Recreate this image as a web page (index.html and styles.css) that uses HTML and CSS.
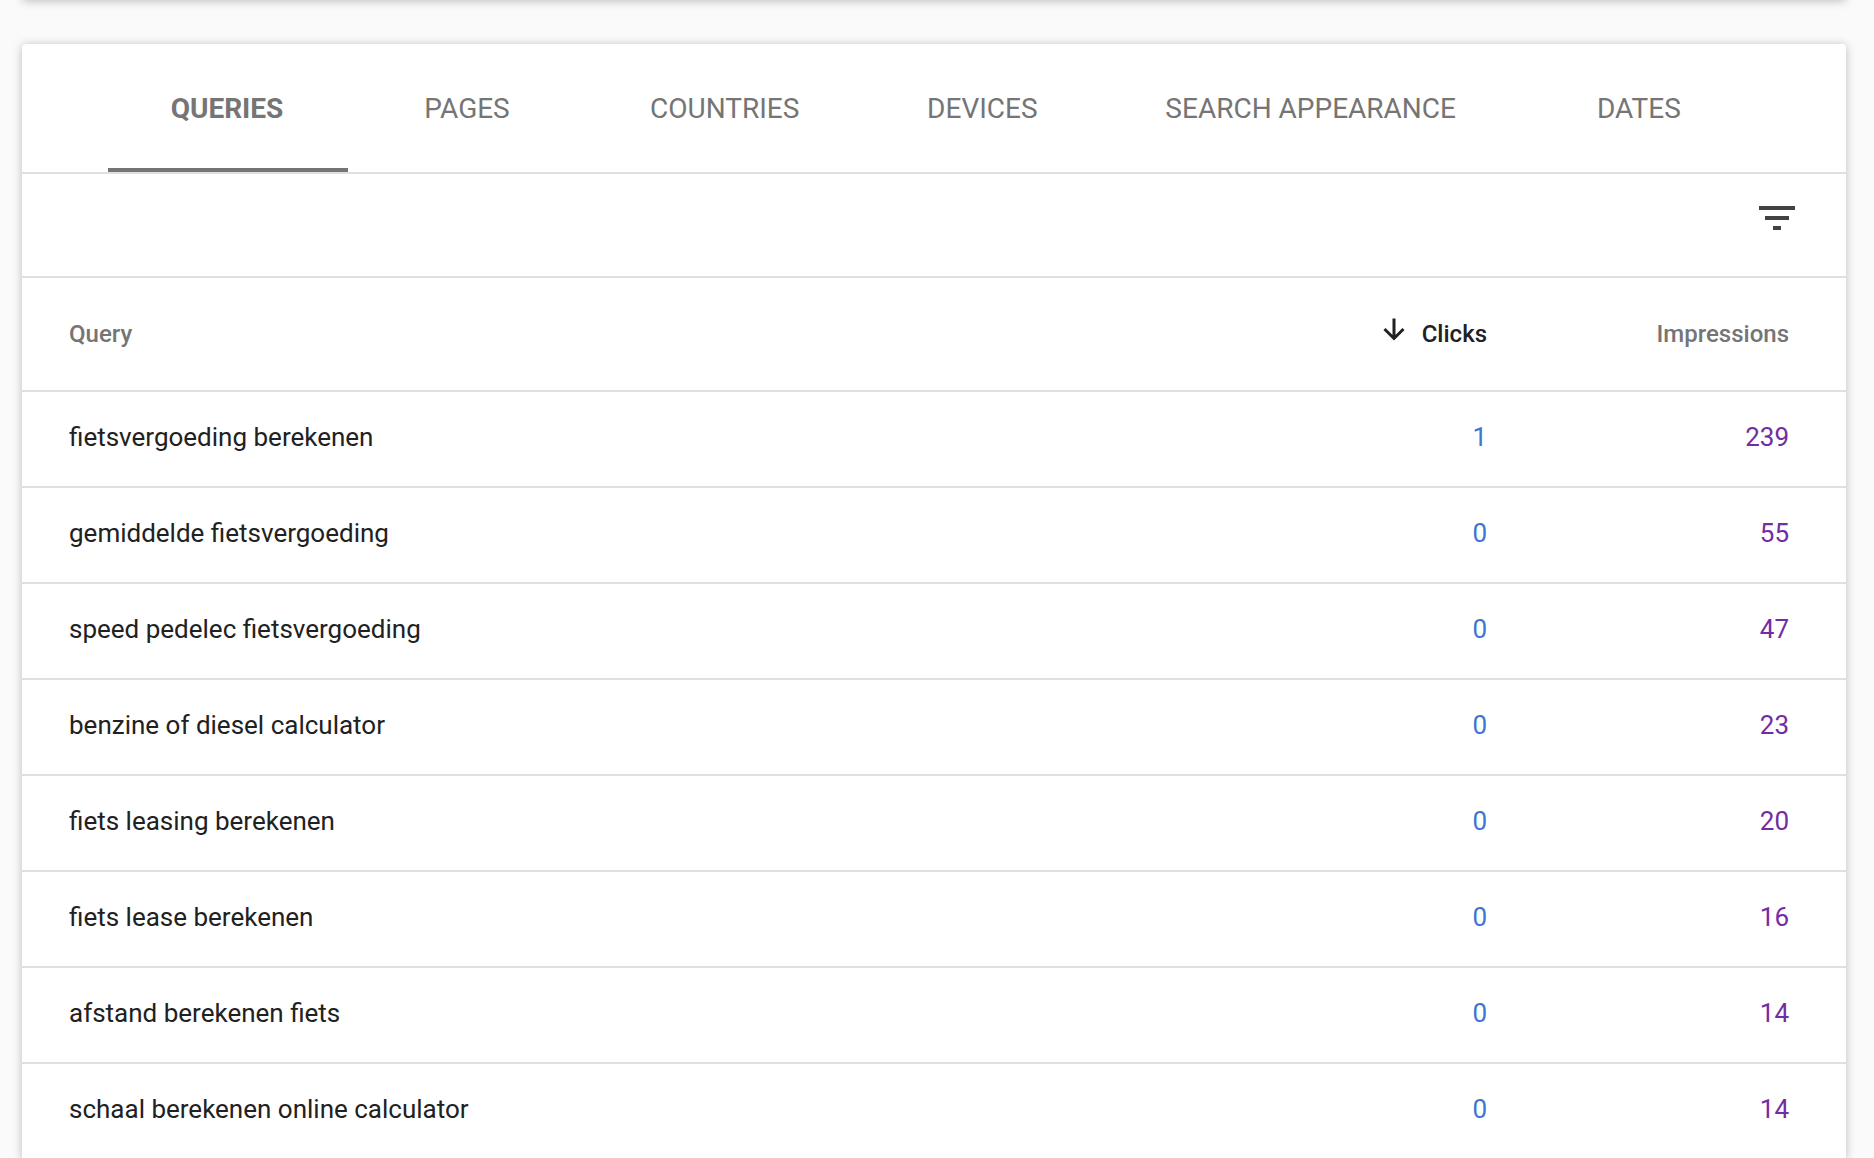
FILE: index.html
```html
<!DOCTYPE html>
<html lang="en">
<head>
<meta charset="utf-8">
<title>Performance</title>
<link rel="stylesheet" href="styles.css">
</head>
<body>
<div class="chart-card"></div>
<main class="card">
  <nav class="tabs" role="tablist">
    <button class="tab active" role="tab" aria-selected="true">QUERIES</button>
    <button class="tab" role="tab">PAGES</button>
    <button class="tab" role="tab">COUNTRIES</button>
    <button class="tab" role="tab">DEVICES</button>
    <button class="tab" role="tab">SEARCH APPEARANCE</button>
    <button class="tab" role="tab">DATES</button>
  </nav>
  <div class="toolbar">
    <button class="filter" aria-label="Filter rows">
      <svg viewBox="0 0 24 24" width="48" height="48"><path d="M10 18h4v-2h-4v2zM3 6v2h18V6H3zm3 7h12v-2H6v2z"/></svg>
    </button>
  </div>
  <table class="data">
    <thead>
      <tr><th class="query" scope="col">Query</th><th class="clicks" scope="col"><button class="sort"><svg viewBox="0 0 24 32" width="24" height="32"><path d="M12 .5v20M2.5 11l9.500 9.500 9.500-9.500"/></svg>Clicks</button></th><th class="impressions" scope="col">Impressions</th></tr>
    </thead>
    <tbody>
      <tr><td>fietsvergoeding berekenen</td><td class="clicks">1</td><td class="impressions">239</td></tr>
      <tr><td>gemiddelde fietsvergoeding</td><td class="clicks">0</td><td class="impressions">55</td></tr>
      <tr><td>speed pedelec fietsvergoeding</td><td class="clicks">0</td><td class="impressions">47</td></tr>
      <tr><td>benzine of diesel calculator</td><td class="clicks">0</td><td class="impressions">23</td></tr>
      <tr><td>fiets leasing berekenen</td><td class="clicks">0</td><td class="impressions">20</td></tr>
      <tr><td>fiets lease berekenen</td><td class="clicks">0</td><td class="impressions">16</td></tr>
      <tr><td>afstand berekenen fiets</td><td class="clicks">0</td><td class="impressions">14</td></tr>
      <tr><td>schaal berekenen online calculator</td><td class="clicks">0</td><td class="impressions">14</td></tr>
    </tbody>
  </table>
</main>
</body>
</html>
```

FILE: styles.css
```css
* { box-sizing: border-box; }

body {
  margin: 0;
  padding: 0 28px 0 22px;
  background: #fafafa;
  color: #212121;
  font-family: Roboto, "Liberation Sans", sans-serif;
  font-size: 26px;
  overflow-y: hidden;
  height: 100vh;
}

button {
  border: 0;
  padding: 0;
  background: none;
  color: inherit;
  font: inherit;
  cursor: pointer;
}

.chart-card,
.card {
  background: #fff;
  border-radius: 4px;
  box-shadow: 0 1px 10px rgba(0, 0, 0, 0.25);
}

.chart-card {
  height: 44px;
  margin-top: -44px;
  margin-bottom: 44px;
}

.tabs {
  display: flex;
  height: 130px;
  padding: 0 86px;
  border-bottom: 2px solid #e0e0e0;
}

.tab {
  min-width: 240px;
  padding: 6px 64px 0 62px;
  border-bottom: 4px solid transparent;
  color: #757575;
  font-size: 28px;
  line-height: 32px;
  white-space: nowrap;
}

.active {
  border-color: #757575;
  font-weight: 700;
}

.toolbar {
  display: flex;
  justify-content: flex-end;
  height: 104px;
  padding: 20px 45px;
  border-bottom: 2px solid #e0e0e0;
}

.filter { height: 48px; }
.filter svg { display: block; fill: #424242; }

.data {
  width: 100%;
  border-collapse: separate;
  border-spacing: 0;
  table-layout: fixed;
}

th, td {
  height: 96px;
  padding: 0 0 4px 47px;
  border-bottom: 2px solid #e0e0e0;
  text-align: left;
  white-space: nowrap;
}

th {
  height: 114px;
  padding-bottom: 0;
  color: #757575;
  font-size: 24px;
  font-weight: 500;
}

.clicks {
  width: 300px;
  padding-left: 0;
  color: #3778d4;
  text-align: right;
}

.impressions {
  width: 359px;
  padding-left: 0;
  padding-right: 57px;
  color: #722ca4;
  text-align: right;
}

th.impressions { color: #757575; }

.sort {
  display: inline-flex;
  align-items: center;
  gap: 16px;
  color: #212121;
  vertical-align: middle;
}

.sort svg { fill: none; stroke: #212121; stroke-width: 3; }
```
